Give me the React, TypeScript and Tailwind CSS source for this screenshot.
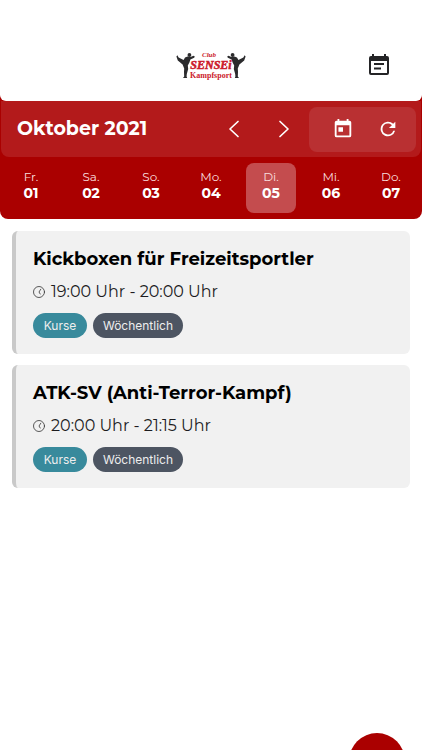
import React from "react";

const days = [
  { name: "Fr.", date: "01" },
  { name: "Sa.", date: "02" },
  { name: "So.", date: "03" },
  { name: "Mo.", date: "04" },
  { name: "Di.", date: "05", selected: true },
  { name: "Mi.", date: "06" },
  { name: "Do.", date: "07" },
];

const events = [
  { title: "Kickboxen für Freizeitsportler", time: "19:00 Uhr - 20:00 Uhr" },
  { title: "ATK-SV (Anti-Terror-Kampf)", time: "20:00 Uhr - 21:15 Uhr" },
];

function Fighter() {
  return (
    <g fill="#2b2b2d">
      <circle cx="13.400" cy="6" r="1.900" />
      <path d="M.4 7.600 1.400 6.200 2.600 8.400 7.600 11 9 8.600 11.600 7.600 14.400 8 17.600 6.800 18.800 7.600 18.200 8.800 14.400 10.400 13.400 13.600 11.800 16.400 12.200 20 10.800 25 10.600 27.600 11.200 29 7 29 8.200 27.600 8 23 8.200 19.400 6.600 15.600 1.800 11.600Z" />
    </g>
  );
}

function Logo() {
  return (
    <svg className="h-8 w-[70px]" viewBox="0 0 70 32" role="img" aria-label="Club Sensei Kampfsport">
      <Fighter />
      <g transform="translate(70 0) scale(-1 1)">
        <Fighter />
      </g>
      <g fill="#cc1a2b" textAnchor="middle" fontWeight="700" fontFamily="'Liberation Serif', serif">
        <text x="33" y="7.500" fontSize="7" fontStyle="italic">Club</text>
        <text x="35" y="20" fontSize="12" fontStyle="italic" stroke="#cc1a2b" strokeWidth="0.500">SENSEi</text>
        <text x="35" y="29" fontSize="8">Kampfsport</text>
      </g>
    </svg>
  );
}

function NoteCalendarIcon() {
  return (
    <svg className="size-6" viewBox="0 0 24 24" fill="#242426" aria-hidden="true">
      <path fillRule="evenodd" d="M4 3h1V1h2v2h10V1h2v2h1a2 2 0 0 1 2 2v15a2 2 0 0 1-2 2H4a2 2 0 0 1-2-2V5a2 2 0 0 1 2-2Zm0 5v12h16V8Z" />
      <path d="M7 10h10v2H7zM7 14.500h7v2H7z" />
    </svg>
  );
}

function TodayIcon() {
  return (
    <svg className="size-[22px]" viewBox="0 0 24 24" fill="currentColor" aria-hidden="true">
      <path d="M19 3h-1V1h-2v2H8V1H6v2H5a2 2 0 0 0-2 2v14a2 2 0 0 0 2 2h14a2 2 0 0 0 2-2V5a2 2 0 0 0-2-2Zm0 16H5V8h14v11ZM7 10h5v5H7z" />
    </svg>
  );
}

function RefreshIcon() {
  return (
    <svg className="size-[22px]" viewBox="0 0 24 24" fill="currentColor" aria-hidden="true">
      <path d="M17.650 6.350A8 8 0 1 0 19.730 14h-2.080A6 6 0 1 1 12 6c1.660 0 3.140.69 4.220 1.780L13 11h7V4z" />
    </svg>
  );
}

function Chevron({ direction }: { direction: "left" | "right" }) {
  return (
    <svg className="h-5 w-3" viewBox="0 0 12 20" fill="none" stroke="currentColor" strokeWidth="1.700" strokeLinecap="round" strokeLinejoin="round" aria-hidden="true">
      <path d={direction === "left" ? "M10 2.500 2 10l8 7.500" : "M2 2.500 10 10l-8 7.500"} />
    </svg>
  );
}

function ClockIcon() {
  return (
    <svg className="size-3" viewBox="0 0 12 12" fill="none" stroke="#333333" strokeWidth="0.800" strokeLinecap="round" aria-hidden="true">
      <circle cx="6" cy="6" r="5.500" />
      <path d="M7.800 3.200 6 6l1.200 2" />
    </svg>
  );
}

export default function App() {
  return (
    <div className="min-h-screen bg-white font-['Montserrat','Inter',sans-serif] text-black">
      <header className="relative z-10 grid h-[101px] grid-cols-3 items-end rounded-b-md bg-white px-[31px] pb-5">
        <div className="col-start-2 justify-self-center">
          <Logo />
        </div>
        <button type="button" aria-label="Termine" className="mb-1 justify-self-end">
          <NoteCalendarIcon />
        </button>
      </header>

      <section className="-mt-2 rounded-b-lg bg-[#aa0000] px-px pt-2">
        <div className="flex h-14 items-center rounded-b-lg bg-[#b31a1b] pr-[5px] pl-4 text-white">
          <h1 className="flex-1 text-[19px] font-bold">Oktober 2021</h1>
          <button type="button" aria-label="Vorherige Woche" className="flex h-11 w-[50px] items-center justify-center">
            <Chevron direction="left" />
          </button>
          <button type="button" aria-label="Nächste Woche" className="flex h-11 w-[50px] items-center justify-center">
            <Chevron direction="right" />
          </button>
          <div className="flex h-[45px] w-[107px] items-center justify-end rounded-lg bg-[#b93032] pr-1.5">
            <button type="button" aria-label="Heute" className="flex h-11 w-[45px] items-center justify-center">
              <TodayIcon />
            </button>
            <button type="button" aria-label="Aktualisieren" className="flex h-11 w-[45px] items-center justify-center">
              <RefreshIcon />
            </button>
          </div>
        </div>
        <div className="grid grid-cols-7 py-1.5 text-white">
          {days.map((day) => (
            <button
              key={day.date}
              type="button"
              aria-pressed={!!day.selected}
              className={`mx-[5px] flex h-[50px] flex-col items-center rounded-lg pt-1.5 ${day.selected ? "bg-[#c44c4e]" : ""}`}
            >
              <span className="text-xs leading-4 text-[#f9dede]">{day.name}</span>
              <span className="text-sm leading-4 font-bold">{day.date}</span>
            </button>
          ))}
        </div>
      </section>

      <main className="flex flex-col gap-[11px] p-3">
        {events.map((event) => (
          <article key={event.title} className="rounded-md border-l-4 border-[#c9c9c9] bg-[#f1f1f1] px-[17px] py-4">
            <h2 className="text-lg leading-6 font-bold">{event.title}</h2>
            <p className="mt-[9px] flex items-center gap-1.5 text-base leading-6 text-[#1c1c1e]">
              <ClockIcon />
              {event.time}
            </p>
            <div className="mt-[9px] flex gap-1.5 font-['Inter',sans-serif] text-xs leading-[25px] text-[#eeeeee]">
              <span className="w-[54px] rounded-full bg-[#388a9c] text-center">Kurse</span>
              <span className="w-[90px] rounded-full bg-[#4d5562] text-center">Wöchentlich</span>
            </div>
          </article>
        ))}
      </main>

      <button type="button" aria-label="Neuer Termin" className="fixed right-[17px] -bottom-[39px] size-14 rounded-full bg-[#aa0000]" />
    </div>
  );
}
